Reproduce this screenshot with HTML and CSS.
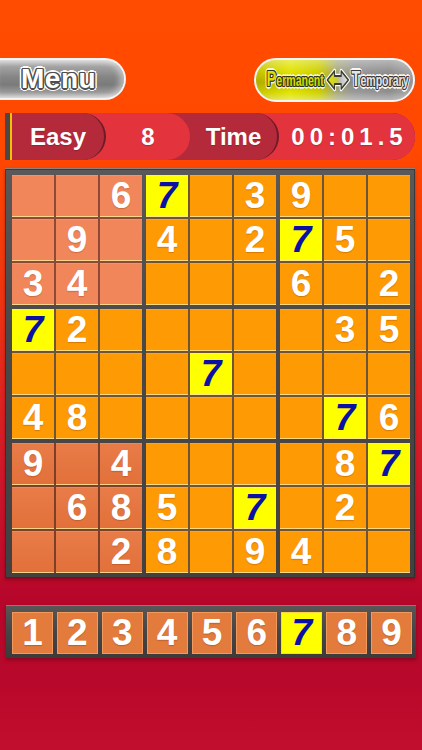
FILE: index.html
```html
<!DOCTYPE html>
<html lang="en">
<head>
<meta charset="utf-8">
<title>Sudoku</title>
<link rel="stylesheet" href="styles.css">
</head>
<body>
<div class="app">
  <div class="topbar">
    <div class="menu-btn"><span class="menu-label">Menu</span></div>
    <div class="toggle">
      <div class="tg-inner">
        <span class="tg-word tg-perm"><span class="cap">P</span>ermanent</span>
        <svg class="tg-arrow" viewBox="0 0 38 24" width="38" height="24">
          <defs>
            <linearGradient id="ag" x1="0" x2="1" y1="0" y2="0">
              <stop offset="0" stop-color="#dfe600"/>
              <stop offset="0.45" stop-color="#c9cc3a"/>
              <stop offset="0.6" stop-color="#bdbdbd"/>
              <stop offset="1" stop-color="#e6e6e6"/>
            </linearGradient>
          </defs>
          <path d="M3 12 L14 3 V8 H24 V3 L35 12 L24 21 V16 H14 V21 Z" fill="none" stroke="#ffffff" stroke-width="4.5" stroke-linejoin="round"/>
          <path d="M3 12 L14 3 V8 H24 V3 L35 12 L24 21 V16 H14 V21 Z" fill="url(#ag)" stroke="#3c3c30" stroke-width="1.8" stroke-linejoin="round"/>
        </svg>
        <span class="tg-word tg-temp"><span class="cap">T</span>emporary</span>
      </div>
    </div>
  </div>

  <div class="status">
    <div class="stripe"></div>
    <div class="seg seg1">Easy</div>
    <div class="seg seg2">8</div>
    <div class="seg seg3">Time</div>
    <div class="seg seg4"><span class="clock">00:01.5</span></div>
  </div>

  <div class="board">
    <div class="box sal">
      <div class="cell"></div><div class="cell"></div><div class="cell">6</div>
      <div class="cell"></div><div class="cell">9</div><div class="cell"></div>
      <div class="cell">3</div><div class="cell">4</div><div class="cell"></div>
    </div>
    <div class="box">
      <div class="cell y">7</div><div class="cell"></div><div class="cell">3</div>
      <div class="cell">4</div><div class="cell"></div><div class="cell">2</div>
      <div class="cell"></div><div class="cell"></div><div class="cell"></div>
    </div>
    <div class="box">
      <div class="cell">9</div><div class="cell"></div><div class="cell"></div>
      <div class="cell y">7</div><div class="cell">5</div><div class="cell"></div>
      <div class="cell">6</div><div class="cell"></div><div class="cell">2</div>
    </div>
    <div class="box">
      <div class="cell y">7</div><div class="cell">2</div><div class="cell"></div>
      <div class="cell"></div><div class="cell"></div><div class="cell"></div>
      <div class="cell">4</div><div class="cell">8</div><div class="cell"></div>
    </div>
    <div class="box">
      <div class="cell"></div><div class="cell"></div><div class="cell"></div>
      <div class="cell"></div><div class="cell y">7</div><div class="cell"></div>
      <div class="cell"></div><div class="cell"></div><div class="cell"></div>
    </div>
    <div class="box">
      <div class="cell"></div><div class="cell">3</div><div class="cell">5</div>
      <div class="cell"></div><div class="cell"></div><div class="cell"></div>
      <div class="cell"></div><div class="cell y">7</div><div class="cell">6</div>
    </div>
    <div class="box sal2">
      <div class="cell">9</div><div class="cell"></div><div class="cell">4</div>
      <div class="cell"></div><div class="cell">6</div><div class="cell">8</div>
      <div class="cell"></div><div class="cell"></div><div class="cell">2</div>
    </div>
    <div class="box">
      <div class="cell"></div><div class="cell"></div><div class="cell"></div>
      <div class="cell">5</div><div class="cell"></div><div class="cell y">7</div>
      <div class="cell">8</div><div class="cell"></div><div class="cell">9</div>
    </div>
    <div class="box">
      <div class="cell"></div><div class="cell">8</div><div class="cell y">7</div>
      <div class="cell"></div><div class="cell">2</div><div class="cell"></div>
      <div class="cell">4</div><div class="cell"></div><div class="cell"></div>
    </div>
  </div>

  <div class="pad">
    <div class="key">1</div><div class="key">2</div><div class="key">3</div>
    <div class="key">4</div><div class="key">5</div><div class="key">6</div>
    <div class="key y">7</div><div class="key">8</div><div class="key">9</div>
  </div>
</div>
</body>
</html>
```

FILE: styles.css
```css
* { box-sizing: border-box; }

html, body {
  margin: 0;
  padding: 0;
}

body {
  width: 422px;
  height: 750px;
  overflow: hidden;
  font-family: "Liberation Sans", Arial, sans-serif;
  background: linear-gradient(to bottom,
    #ff4c00 0px, #ff4800 150px, #ee3412 300px,
    #d0182a 470px, #b6062a 600px, #b8082b 680px, #c20e2e 750px);
}

.app {
  display: flex;
  flex-direction: column;
  align-items: flex-start;
}

/* ---------- top bar ---------- */
.topbar {
  width: 422px;
  padding-top: 58px;
  display: flex;
  justify-content: space-between;
  align-items: flex-start;
  height: 102px;
}

.menu-btn {
  width: 126px;
  height: 42px;
  border: 2px solid #f4f4f4;
  border-left: none;
  border-radius: 0 21px 21px 0;
  background: linear-gradient(to bottom,
    #d6d6d6 0%, #a2a2a2 18%, #858585 45%, #7a7a7a 65%, #9a9a9a 85%, #d2d2d2 100%);
  box-shadow: inset -4px 0 6px rgba(255,255,255,0.45);
  display: flex;
  align-items: center;
  padding-left: 21px;
}

.menu-label {
  color: #ffffff;
  font-size: 28px;
  font-weight: 700;
  letter-spacing: 0.5px;
  text-shadow:
    1.5px 0 #4e4e4e, -1.5px 0 #4e4e4e, 0 1.5px #4e4e4e, 0 -1.5px #4e4e4e,
    1.1px 1.1px #4e4e4e, -1.1px -1.1px #4e4e4e, 1.1px -1.1px #4e4e4e, -1.1px 1.1px #4e4e4e,
    3px 0 #fafafa, -3px 0 #fafafa, 0 3px #fafafa, 0 -3px #fafafa,
    2.2px 2.2px #fafafa, -2.2px -2.2px #fafafa, 2.2px -2.2px #fafafa, -2.2px 2.2px #fafafa;
}

.toggle {
  width: 161px;
  height: 44px;
  margin-right: 7px;
  border: 2px solid #f6f6f6;
  border-radius: 22px;
  background:
    linear-gradient(to bottom, rgba(255,255,255,0.35) 0%, rgba(255,255,255,0) 30%, rgba(0,0,0,0.12) 55%, rgba(255,255,255,0) 80%, rgba(255,255,255,0.35) 100%),
    linear-gradient(to right, #c6c400 0%, #e2e400 22%, #cfd000 40%, #a8a880 52%, #9a9a9a 62%, #909090 85%, #a8a8a8 100%);
  display: flex;
  justify-content: center;
  align-items: center;
  padding-left: 6px;
  overflow: visible;
}

.tg-inner {
  flex-shrink: 0;
  display: flex;
  align-items: center;
  gap: 2px;
  transform: scaleX(0.66);
}

.tg-word {
  font-size: 16px;
  font-weight: 700;
  line-height: 24px;
  white-space: nowrap;
}

.tg-word .cap {
  font-size: 22px;
}

.tg-perm {
  color: #d8e000;
  text-shadow:
    1.3px 0 #34341a, -1.3px 0 #34341a, 0 1.3px #34341a, 0 -1.3px #34341a,
    1px 1px #34341a, -1px -1px #34341a, 1px -1px #34341a, -1px 1px #34341a,
    2.6px 0 #f4f4d0, -2.6px 0 #f4f4d0, 0 2.6px #f4f4d0, 0 -2.6px #f4f4d0,
    1.9px 1.9px #f4f4d0, -1.9px -1.9px #f4f4d0, 1.9px -1.9px #f4f4d0, -1.9px 1.9px #f4f4d0;
}

.tg-temp {
  color: #e4e4e4;
  text-shadow:
    1.3px 0 #3a3a3a, -1.3px 0 #3a3a3a, 0 1.3px #3a3a3a, 0 -1.3px #3a3a3a,
    1px 1px #3a3a3a, -1px -1px #3a3a3a, 1px -1px #3a3a3a, -1px 1px #3a3a3a,
    2.6px 0 #f6f6f6, -2.6px 0 #f6f6f6, 0 2.6px #f6f6f6, 0 -2.6px #f6f6f6,
    1.9px 1.9px #f6f6f6, -1.9px -1.9px #f6f6f6, 1.9px -1.9px #f6f6f6, -1.9px 1.9px #f6f6f6;
}

.tg-arrow {
  display: block;
  flex-shrink: 0;
}

/* ---------- status bar ---------- */
.status {
  margin-top: 11px;
  margin-left: 5px;
  width: 410px;
  height: 47px;
  display: flex;
  background: #b42a3b;
  border-radius: 0 24px 24px 0;
  box-shadow: inset 0 1px 0 rgba(110,20,30,0.5), inset 0 -1px 0 rgba(110,20,30,0.35);
}

.stripe {
  width: 7px;
  flex-shrink: 0;
  background: linear-gradient(to right, #4c4648 0, #4c4648 5px, #f2c400 5px, #f2c400 7px);
}

.seg {
  height: 47px;
  display: flex;
  align-items: center;
  justify-content: center;
  flex-shrink: 0;
  color: #ffffff;
  font-size: 24px;
  font-weight: 700;
  border-radius: 0 24px 24px 0;
  text-shadow: 0 1px 1px rgba(80,0,10,0.25);
}

.seg1 {
  width: 94px;
  background: #b42a3b;
  border-right: 2px solid #6c1c28;
  z-index: 4;
}

.seg2 {
  width: 110px;
  margin-left: -26px;
  padding-left: 26px;
  background: #e3333d;
  z-index: 3;
}

.seg3 {
  width: 115px;
  margin-left: -26px;
  padding-left: 26px;
  background: #b42a3b;
  border-right: 2px solid #6c1c28;
  z-index: 2;
}

.seg4 {
  width: 162px;
  margin-left: -26px;
  padding-left: 26px;
  background: #e3333d;
  border-radius: 0 23px 23px 0;
  z-index: 1;
}

.clock {
  letter-spacing: 5px;
  padding-left: 5px;
}

/* ---------- board ---------- */
.board {
  margin-top: 8px;
  margin-left: 5px;
  width: 410px;
  height: 410px;
  padding: 6px 5px 6px 7px;
  display: grid;
  grid-template-columns: repeat(3, 130px);
  grid-template-rows: repeat(3, 130px);
  gap: 4px;
  background: linear-gradient(to bottom, #5a5858 0%, #4a4848 40%, #424040 100%);
  border-top: 1px solid #8e807a;
  box-shadow: 0 2px 3px rgba(60,0,10,0.35), inset 0 0 0 1px rgba(30,30,30,0.5);
}

.box {
  display: grid;
  grid-template-columns: repeat(3, 42px);
  grid-template-rows: repeat(3, 42px);
  gap: 2px;
  background: #6e5438;
}

.box.sal { background: #8e4a36; }
.box.sal2 { background: #7c4028; }

.cell {
  background: #fe9a04;
  color: #ffffff;
  font-size: 37px;
  font-weight: 700;
  line-height: 42px;
  text-align: center;
  text-shadow: 0 1px 1px rgba(120,50,0,0.3);
  box-shadow: inset 0 -1px 0 rgba(255,228,150,0.85), inset 0 1px 0 rgba(255,255,255,0.12);
}

.box.sal .cell { background: #f0865a; }
.box.sal2 .cell { background: linear-gradient(to bottom, #e87c48, #e2703a); }

.cell.y, .box .cell.y {
  background: #ffff00;
  color: #0b10a6;
  font-style: italic;
  text-shadow: none;
}

/* ---------- number pad ---------- */
.pad {
  margin-top: 27px;
  margin-left: 6px;
  width: 410px;
  height: 53px;
  padding: 6px 4px 5px 6px;
  display: grid;
  grid-template-columns: repeat(9, 1fr);
  gap: 4px;
  background: linear-gradient(to bottom, #5a5656 0%, #464444 50%, #3c3a3a 100%);
  border-top: 1px solid #8a7a78;
  box-shadow: 0 2px 3px rgba(60,0,10,0.35);
}

.key {
  background: #e27b3c;
  color: #ffffff;
  font-size: 37px;
  font-weight: 700;
  line-height: 42px;
  text-align: center;
  box-shadow: inset 0 0 0 1px rgba(255,180,120,0.55);
  text-shadow: 0 1px 1px rgba(100,40,0,0.3);
}

.key.y {
  background: #ffff00;
  color: #0b10a6;
  font-style: italic;
  text-shadow: none;
}
```
